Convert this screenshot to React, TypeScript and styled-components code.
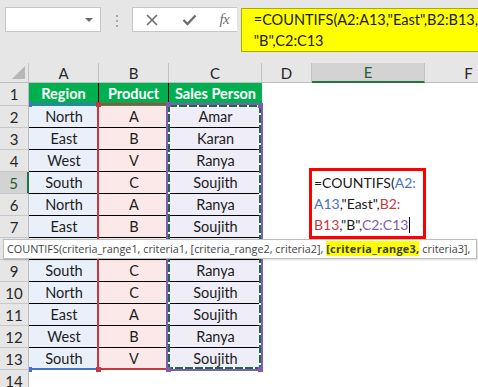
import React from "react";
import styled, { createGlobalStyle } from "styled-components";

const GlobalStyle = createGlobalStyle`
  html, body { margin: 0; padding: 0; background: #ffffff; }
  body { overflow: hidden; font-family: "Lato", "Liberation Sans", sans-serif; }
`;

const Frame = styled.div`
  position: relative;
  width: 478px;
  height: 387px;
  overflow: hidden;
  background: #ffffff;
  font-family: "Lato", "Liberation Sans", sans-serif;
`;

/* ---------- top bar ---------- */
const TopBar = styled.div`
  height: 63px;
  box-sizing: border-box;
  background: #e6e6e6;
  display: flex;
  align-items: flex-start;
  padding: 7px 0 0 5px;
`;

const NameBox = styled.div`
  width: 101px;
  height: 25px;
  box-sizing: border-box;
  background: #ffffff;
  border: 1px solid #c6c6c6;
  display: flex;
  align-items: center;
  justify-content: flex-end;
  padding-right: 7px;
`;

const Caret = styled.span`
  width: 0;
  height: 0;
  border-left: 4px solid transparent;
  border-right: 4px solid transparent;
  border-top: 4px solid #6a6a6a;
`;

const Grip = styled.div`
  display: flex;
  flex-direction: column;
  gap: 3px;
  margin: 8px 14px 0 15px;
`;

const GripDot = styled.span`
  width: 2px;
  height: 2px;
  background: #a8a8a8;
`;

const FxBox = styled.div`
  width: 109px;
  height: 25px;
  box-sizing: border-box;
  background: #ffffff;
  border: 1px solid #c6c6c6;
  border-right: none;
  display: flex;
  align-items: center;
  padding-left: 12px;
`;

const IconSlot = styled.span<{ $w: number }>`
  width: ${(p) => p.$w}px;
  display: flex;
  align-items: center;
  justify-content: center;
`;

const FxText = styled.span`
  font-family: "Liberation Serif", "DejaVu Serif", serif;
  font-style: italic;
  font-size: 15px;
  color: #6e6e6e;
  letter-spacing: -0.5px;
`;

const FormulaInput = styled.div`
  flex: 1;
  margin: 1px 0 0 4px;
  height: 44px;
  box-sizing: border-box;
  background: #ffff00;
  border: 1px solid #a9a900;
  border-right: none;
  padding: 0 0 0 12px;
  font-size: 14.5px;
  line-height: 21px;
  color: #1a1a1a;
  white-space: pre;
`;

/* ---------- sheet ---------- */
const Sheet = styled.div`
  position: relative;
  display: grid;
  grid-template-columns: 29px 70px 70px 93px 50px 113px 88px;
  grid-template-rows: 20px 23px repeat(13, 22px);
`;

const Corner = styled.div`
  position: relative;
  background: #e6e6e6;
  border-right: 1px solid #c3c3c3;
  border-bottom: 1px solid #bdbdbd;
  &::after {
    content: "";
    position: absolute;
    right: 3px;
    bottom: 3px;
    width: 0;
    height: 0;
    border-left: 13px solid transparent;
    border-bottom: 13px solid #b6b6b6;
  }
`;

const ColHead = styled.div<{ $active?: boolean }>`
  background: ${(p) => (p.$active ? "#d3d3d3" : "#e6e6e6")};
  border-right: 1px solid #c3c3c3;
  border-bottom: ${(p) => (p.$active ? "2px solid #217346" : "1px solid #bdbdbd")};
  display: flex;
  align-items: center;
  justify-content: center;
  font-size: 15px;
  color: ${(p) => (p.$active ? "#1f5f3a" : "#262626")};
  box-sizing: border-box;
`;

const RowHead = styled.div<{ $active?: boolean }>`
  background: ${(p) => (p.$active ? "#d3d3d3" : "#e6e6e6")};
  border-right: ${(p) => (p.$active ? "2px solid #217346" : "1px solid #bdbdbd")};
  border-bottom: 1px solid #c8c8c8;
  display: flex;
  align-items: center;
  justify-content: center;
  font-size: 15px;
  color: ${(p) => (p.$active ? "#1f5f3a" : "#262626")};
  box-sizing: border-box;
`;

const TitleCell = styled.div<{ $divider?: boolean }>`
  background: #00b050;
  color: #ffffff;
  font-weight: 700;
  font-size: 14.5px;
  display: flex;
  align-items: center;
  justify-content: center;
  white-space: nowrap;
  overflow: hidden;
  border-right: ${(p) => (p.$divider ? "1px solid #000" : "none")};
  box-sizing: border-box;
  padding-bottom: 2px;
`;

const DataCell = styled.div<{ $tint: string }>`
  background: ${(p) => p.$tint};
  border-bottom: 1px solid #000000;
  display: flex;
  align-items: center;
  justify-content: center;
  font-size: 14.5px;
  color: #1c1c1c;
  box-sizing: border-box;
`;

const EmptyCell = styled.div`
  background: #ffffff;
`;

/* ---------- overlays ---------- */
const RangeBox = styled.div<{ $x: number; $y: number; $w: number; $h: number; $c: string; $noLeft?: boolean }>`
  position: absolute;
  left: ${(p) => p.$x}px;
  top: ${(p) => p.$y}px;
  width: ${(p) => p.$w}px;
  height: ${(p) => p.$h}px;
  box-sizing: border-box;
  border: 2px solid ${(p) => p.$c};
  ${(p) => (p.$noLeft ? "border-left: none;" : "")}
  pointer-events: none;
`;

const Marquee = styled.svg`
  position: absolute;
  left: 0;
  top: 0;
`;

const Handle = styled.div<{ $x: number; $y: number; $w?: number; $c: string }>`
  position: absolute;
  left: ${(p) => p.$x}px;
  top: ${(p) => p.$y}px;
  width: ${(p) => p.$w ?? 5}px;
  height: 5px;
  background: ${(p) => p.$c};
`;

const Tooltip = styled.div`
  position: absolute;
  left: 3px;
  top: 239px;
  width: 474px;
  height: 20px;
  box-sizing: border-box;
  background: #ffffff;
  border: 1px solid #bdbdbd;
  box-shadow: 1px 1px 2px rgba(0, 0, 0, 0.15);
  padding-left: 3px;
  font-family: "Open Sans", "Liberation Sans", sans-serif;
  font-size: 10.85px;
  line-height: 18px;
  color: #444444;
  white-space: nowrap;
`;

const Current = styled.span`
  background: #ffff00;
  font-weight: 700;
  color: #3a3a3a;
  letter-spacing: 0.3px;
`;

const EditBox = styled.div`
  position: absolute;
  left: 309px;
  top: 168px;
  width: 117px;
  height: 71px;
  box-sizing: border-box;
  border: 3px solid #ff0000;
  background: #ffffff;
  padding: 1px 0 0 2px;
  font-size: 14px;
  line-height: 21px;
  color: #1a1a1a;
  white-space: pre;
`;

const Ref = styled.span<{ $c: string }>`
  color: ${(p) => p.$c};
`;

const TextCursor = styled.span`
  display: inline-block;
  width: 1px;
  height: 16px;
  background: #000;
  vertical-align: -3px;
  margin-left: 1px;
`;

const BLUE = "#4472c4";
const RED = "#c9373f";
const PURPLE = "#7e5cb8";
const GREEN = "#1d6b43";

const tints = ["#e9f0fa", "#fbe9ea", "#efedf8"];

/* row 8 lies under the function tooltip and is not visible */
const data: [string, string, string][] = [
  ["North", "A", "Amar"],
  ["East", "B", "Karan"],
  ["West", "V", "Ranya"],
  ["South", "C", "Soujith"],
  ["North", "A", "Ranya"],
  ["East", "B", "Soujith"],
  ["", "", ""],
  ["South", "C", "Ranya"],
  ["North", "C", "Soujith"],
  ["East", "A", "Soujith"],
  ["West", "B", "Ranya"],
  ["South", "V", "Soujith"],
];

const cols = ["A", "B", "C", "D", "E", "F"];

export default function App() {
  const rows: React.ReactNode[] = [];
  for (let r = 1; r <= 14; r++) {
    rows.push(
      <RowHead key={`rh${r}`} $active={r === 5}>
        {r === 8 ? "" : r}
      </RowHead>
    );
    if (r === 1) {
      rows.push(<TitleCell key="t1" $divider>Region</TitleCell>);
      rows.push(<TitleCell key="t2" $divider>Product</TitleCell>);
      rows.push(<TitleCell key="t3">Sales Person</TitleCell>);
    } else if (r <= 13) {
      const d = data[r - 2];
      d.forEach((v, i) =>
        rows.push(
          <DataCell key={`d${r}${i}`} $tint={tints[i]}>
            {v}
          </DataCell>
        )
      );
    } else {
      rows.push(<EmptyCell key="e14a" />, <EmptyCell key="e14b" />, <EmptyCell key="e14c" />);
    }
    rows.push(<EmptyCell key={`x${r}d`} />, <EmptyCell key={`x${r}e`} />, <EmptyCell key={`x${r}f`} />);
  }

  return (
    <Frame>
      <GlobalStyle />
      <TopBar>
        <NameBox>
          <Caret />
        </NameBox>
        <Grip>
          <GripDot />
          <GripDot />
          <GripDot />
        </Grip>
        <FxBox>
          <IconSlot $w={13}>
            <svg width="12" height="12" viewBox="0 0 12 12">
              <path d="M1 1 L11 11 M11 1 L1 11" stroke="#6e6e6e" strokeWidth="1.6" fill="none" />
            </svg>
          </IconSlot>
          <IconSlot $w={24} />
          <IconSlot $w={15}>
            <svg width="15" height="12" viewBox="0 0 15 12">
              <path d="M1.5 6 L5.5 10 L13.5 1.5" stroke="#6e6e6e" strokeWidth="2.4" fill="none" />
            </svg>
          </IconSlot>
          <IconSlot $w={22} />
          <FxText>fx</FxText>
        </FxBox>
        <FormulaInput>{'=COUNTIFS(A2:A13,"East",B2:B13,\n"B",C2:C13'}</FormulaInput>
      </TopBar>

      <Sheet>
        <Corner />
        {cols.map((c) => (
          <ColHead key={c} $active={c === "E"}>
            {c}
          </ColHead>
        ))}
        {rows}

        <RangeBox $x={29} $y={40} $w={70} $h={267} $c={BLUE} $noLeft />
        <RangeBox $x={97} $y={40} $w={72} $h={267} $c={RED} />
        <RangeBox $x={166} $y={40} $w={97} $h={268} $c={PURPLE}>
          <Marquee width="93" height="264" viewBox="0 0 93 264">
            <rect x="1" y="1" width="91" height="262" fill="none" stroke="#ffffff" strokeWidth="2" />
            <rect x="1" y="1" width="91" height="262" fill="none" stroke={GREEN} strokeWidth="2" strokeDasharray="8 2" />
          </Marquee>
        </RangeBox>

        <Handle $x={29} $y={39} $w={3} $c={BLUE} />
        <Handle $x={29} $y={304} $w={3} $c={BLUE} />
        <Handle $x={96} $y={39} $c={RED} />
        <Handle $x={96} $y={304} $c={RED} />
        <Handle $x={166} $y={39} $c={PURPLE} />
        <Handle $x={166} $y={304} $c={PURPLE} />
        <Handle $x={258} $y={40} $c={PURPLE} />
        <Handle $x={258} $y={304} $c={PURPLE} />
      </Sheet>

      <EditBox>
        {"=COUNTIFS("}
        <Ref $c={BLUE}>A2:</Ref>
        {"\n"}
        <Ref $c={BLUE}>A13</Ref>
        {',"East",'}
        <Ref $c={RED}>B2:</Ref>
        {"\n"}
        <Ref $c={RED}>B13</Ref>
        {',"B",'}
        <Ref $c={PURPLE}>C2:C13</Ref>
        <TextCursor />
      </EditBox>

      <Tooltip>
        {"COUNTIFS(criteria_range1, criteria1, [criteria_range2, criteria2], "}
        <Current>[criteria_range3,</Current>
        {" criteria3],"}
      </Tooltip>
    </Frame>
  );
}
